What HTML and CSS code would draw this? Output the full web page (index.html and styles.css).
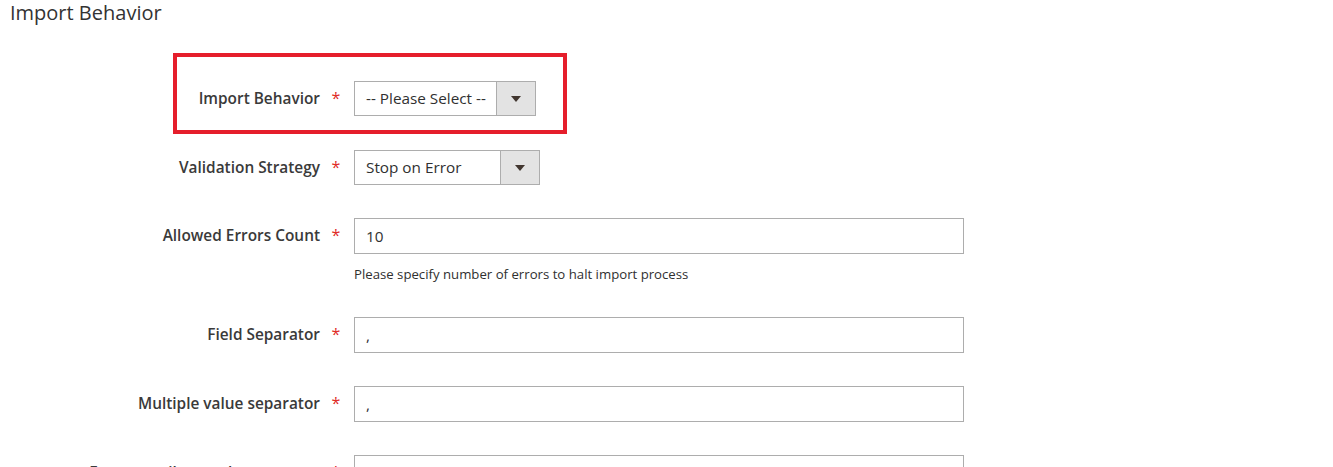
FILE: index.html
```html
<!DOCTYPE html>
<html lang="en">
<head>
<meta charset="UTF-8">
<title>Import Behavior</title>
<link rel="stylesheet" href="styles.css">
</head>
<body>

<h2 class="section-title">Import Behavior</h2>

<div class="fieldset">
    <!-- highlighted row -->
    <div class="field field-first">
        <div class="highlight"></div>
        <label class="field-label required">Import Behavior</label>
        <div class="control">
            <div class="select select-behavior">
                <span class="select-value">-- Please Select --</span>
                <span class="select-arrow"></span>
            </div>
        </div>
    </div>

    <div class="field">
        <label class="field-label required">Validation Strategy</label>
        <div class="control">
            <div class="select select-strategy">
                <span class="select-value">Stop on Error</span>
                <span class="select-arrow"></span>
            </div>
        </div>
    </div>

    <div class="field">
        <label class="field-label required">Allowed Errors Count</label>
        <div class="control">
            <input class="input-text" type="text" value="10">
            <div class="note">Please specify number of errors to halt import process</div>
        </div>
    </div>

    <div class="field">
        <label class="field-label required">Field Separator</label>
        <div class="control">
            <input class="input-text" type="text" value=",">
        </div>
    </div>

    <div class="field">
        <label class="field-label required">Multiple value separator</label>
        <div class="control">
            <input class="input-text" type="text" value=",">
        </div>
    </div>

    <div class="field">
        <label class="field-label required">Empty attribute value constant</label>
        <div class="control">
            <input class="input-text" type="text" value="__EMPTY__VALUE__">
        </div>
    </div>
</div>

</body>
</html>
```

FILE: styles.css
```css
body {
    margin: 0;
    padding: 0;
    background-color: #ffffff;
    color: #303030;
    font-family: "Open Sans", Arial, sans-serif;
    font-size: 15px;
    overflow: hidden;
}

.section-title {
    margin: 0;
    padding-left: 10px;
    font-size: 20px;
    font-weight: 400;
    line-height: 26px;
    color: #333333;
}

.fieldset {
    padding-top: 55px;
}

.field {
    display: flex;
    align-items: flex-start;
    margin-bottom: 33px;
    position: relative;
}

.field-first {
    margin-bottom: 34px;
}

.field-label {
    width: 320px;
    flex: 0 0 320px;
    text-align: right;
    font-size: 15.4px;
    font-weight: 600;
    line-height: 35px;
    color: #3a3a3a;
    white-space: nowrap;
}

.field-label.required::after {
    content: "*";
    display: inline-block;
    width: 32px;
    text-align: center;
    color: #e02b27;
    font-weight: 400;
    font-size: 16px;
    position: absolute;
    left: 320px;
}

.control {
    margin-left: 34px;
}

.select {
    display: flex;
    height: 35px;
    box-sizing: border-box;
    border: 1px solid #adadad;
    background: #ffffff;
}

.select-behavior {
    width: 182px;
}

.select-strategy {
    width: 186px;
}

.select-value {
    flex: 1;
    padding-left: 11px;
    font-size: 15.3px;
    line-height: 33px;
    white-space: nowrap;
}

.select-arrow {
    width: 38px;
    flex: 0 0 38px;
    background-color: #e3e3e3;
    border-left: 1px solid #adadad;
    position: relative;
}

.select-arrow::after {
    content: "";
    position: absolute;
    left: 50%;
    top: 50%;
    margin-left: -5px;
    margin-top: -3px;
    border-left: 5px solid transparent;
    border-right: 5px solid transparent;
    border-top: 6px solid #41362f;
}

.input-text {
    display: block;
    width: 610px;
    height: 36px;
    box-sizing: border-box;
    margin: 0;
    padding: 0 11px;
    border: 1px solid #adadad;
    font-family: "Open Sans", Arial, sans-serif;
    font-size: 15.3px;
    color: #303030;
    outline: none;
}

.note {
    margin-top: 11px;
    font-size: 13.2px;
    line-height: 19px;
}

.highlight {
    position: absolute;
    left: 173px;
    top: -28px;
    width: 394px;
    height: 81px;
    box-sizing: border-box;
    border: 4px solid #e51e2b;
    pointer-events: none;
}
```
